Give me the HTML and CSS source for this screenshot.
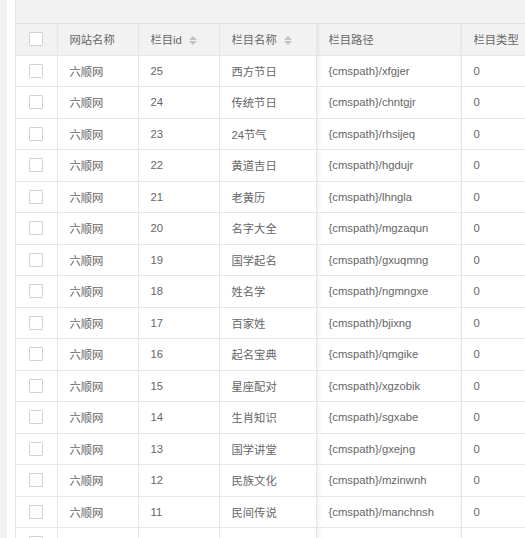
FILE: index.html
```html
<!DOCTYPE html>
<html lang="zh-CN">
<head>
    <meta charset="UTF-8">
    <title>栏目管理</title>
    <link rel="stylesheet" href="styles.css">
</head>
<body>
    <div class="panel">
        <div class="table-box">
            <div class="table-tool"></div>
            <table class="data-table">
                <colgroup>
                    <col class="c-check">
                    <col class="c-site">
                    <col class="c-id">
                    <col class="c-name">
                    <col class="c-path">
                    <col class="c-type">
                </colgroup>
                <thead>
                    <tr>
                        <th class="check"><span class="checkbox"></span></th>
                        <th>网站名称</th>
                        <th>栏目id <span class="sort"><i class="up"></i><i class="down"></i></span></th>
                        <th>栏目名称 <span class="sort"><i class="up"></i><i class="down"></i></span></th>
                        <th class="path">栏目路径</th>
                        <th>栏目类型</th>
                    </tr>
                </thead>
                <tbody id="rows"></tbody>
            </table>
        </div>
    </div>
    <script>
    var data = [
        [25, '西方节日', 'xfgjer'],
        [24, '传统节日', 'chntgjr'],
        [23, '24节气', 'rhsijeq'],
        [22, '黄道吉日', 'hgdujr'],
        [21, '老黄历', 'lhngla'],
        [20, '名字大全', 'mgzaqun'],
        [19, '国学起名', 'gxuqmng'],
        [18, '姓名学', 'ngmngxe'],
        [17, '百家姓', 'bjixng'],
        [16, '起名宝典', 'qmgike'],
        [15, '星座配对', 'xgzobik'],
        [14, '生肖知识', 'sgxabe'],
        [13, '国学讲堂', 'gxejng'],
        [12, '民族文化', 'mzinwnh'],
        [11, '民间传说', 'manchnsh'],
        [10, '', '']
    ];
    var html = '';
    data.forEach(function (d) {
        html += '<tr>' +
            '<td class="check"><span class="checkbox"></span></td>' +
            '<td>' + (d[1] ? '六顺网' : '') + '</td>' +
            '<td>' + (d[1] ? d[0] : '') + '</td>' +
            '<td>' + d[1] + '</td>' +
            '<td class="path">' + (d[2] ? '{cmspath}/' + d[2] : '') + '</td>' +
            '<td>' + (d[1] ? '0' : '') + '</td>' +
            '</tr>';
    });
    document.getElementById('rows').innerHTML = html;
    </script>
</body>
</html>
```

FILE: styles.css
```css
body {
    margin: 0;
    padding-left: 7px;
    background-color: #f2f2f2;
    font-family: "Liberation Sans", "Noto Sans CJK SC", sans-serif;
    font-size: 11.3px;
    color: #666;
    overflow: hidden;
}

.panel {
    background-color: #fff;
    padding-left: 8px;
    height: 538px;
    overflow: hidden;
}

.table-box {
    border-left: 1px solid #e6e6e6;
    width: 610px;
}

.table-tool {
    height: 24px;
    background-color: #f2f2f2;
    border-bottom: 1px solid #e2e2e2;
    box-sizing: border-box;
}

.data-table {
    border-collapse: collapse;
    table-layout: fixed;
    width: 610px;
}

.c-check { width: 41px; }
.c-site { width: 81px; }
.c-id { width: 81px; }
.c-name { width: 97px; }
.c-path { width: 145px; }
.c-type { width: 165px; }

.data-table th,
.data-table td {
    height: 30.5px;
    padding: 0 12px;
    border-right: 1px solid #e6e6e6;
    border-bottom: 1px solid #e6e6e6;
    text-align: left;
    white-space: nowrap;
    overflow: hidden;
}

.data-table th {
    font-weight: normal;
    background-color: #f2f2f2;
    color: #666;
}

.data-table td {
    background-color: #fff;
}

.data-table .check {
    padding: 0;
    text-align: center;
}

.data-table .path {
    background-image: linear-gradient(to right, rgba(0, 0, 0, 0.06), rgba(0, 0, 0, 0) 5px);
}

.checkbox {
    display: inline-block;
    width: 12px;
    height: 12px;
    border: 1px solid #d2d2d2;
    border-radius: 1px;
    background-color: #fff;
    vertical-align: middle;
}

.sort {
    display: inline-block;
    vertical-align: middle;
    margin-left: 4px;
    width: 8px;
    height: 9px;
    position: relative;
    top: -1px;
}

.sort i {
    display: block;
    width: 0;
    height: 0;
    border-left: 4px solid transparent;
    border-right: 4px solid transparent;
}

.sort .up {
    border-bottom: 4px solid #c2c2c2;
    margin-bottom: 1px;
}

.sort .down {
    border-top: 4px solid #c2c2c2;
}
```
